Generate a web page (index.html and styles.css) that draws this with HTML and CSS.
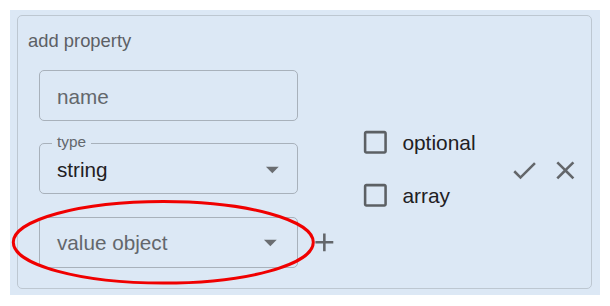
FILE: index.html
```html
<!DOCTYPE html>
<html>
<head>
<meta charset="utf-8">
<link rel="stylesheet" href="styles.css">
</head>
<body>
<div class="outer">
  <div class="panel">
    <div class="title">add property</div>
    <div class="row">
      <div class="fields">
        <div class="field"><span class="placeholder">name</span></div>
        <div class="field">
          <span class="label">type</span>
          <span class="value">string</span>
          <svg class="arrow" viewBox="0 0 24 24"><path d="M7 10l5 5 5-5z"/></svg>
        </div>
        <div class="value-row">
          <div class="field">
            <span class="placeholder">value object</span>
            <svg class="arrow arrow-alt" viewBox="0 0 24 24"><path d="M7 10l5 5 5-5z"/></svg>
          </div>
          <svg class="icon plus" viewBox="0 0 24 24"><path d="M19 13h-6v6h-2v-6H5v-2h6V5h2v6h6v2z"/></svg>
        </div>
      </div>
      <div class="checks">
        <label class="check">
          <span class="box"><svg class="icon" viewBox="0 0 24 24"><path d="M19 5v14H5V5h14m0-2H5c-1.11 0-2 .9-2 2v14c0 1.1.89 2 2 2h14c1.1 0 2-.9 2-2V5c0-1.1-.9-2-2-2z"/></svg></span>
          <span class="check-text">optional</span>
        </label>
        <label class="check">
          <span class="box"><svg class="icon" viewBox="0 0 24 24"><path d="M19 5v14H5V5h14m0-2H5c-1.11 0-2 .9-2 2v14c0 1.1.89 2 2 2h14c1.1 0 2-.9 2-2V5c0-1.1-.9-2-2-2z"/></svg></span>
          <span class="check-text">array</span>
        </label>
      </div>
      <div class="actions">
        <svg class="icon" viewBox="0 0 24 24"><path d="M9 16.17L4.83 12l-1.420 1.41L9 19 21 7l-1.41-1.41z"/></svg>
        <svg class="icon" viewBox="0 0 24 24"><path d="M19 6.41L17.59 5 12 10.59 6.41 5 5 6.41 10.59 12 5 17.59 6.41 19 12 13.41 17.59 19 19 17.59 13.41 12z"/></svg>
      </div>
    </div>
  </div>
</div>
<svg class="annotation" width="610" height="306" viewBox="0 0 610 306">
  <ellipse cx="163.3" cy="242.3" rx="150" ry="40.8" fill="none" stroke="#f00000" stroke-width="3"/>
</svg>
</body>
</html>
```

FILE: styles.css
```css
html, body {
  margin: 0;
  padding: 0;
  background: #ffffff;
}

body {
  font-family: "Liberation Sans", Arial, Helvetica, sans-serif;
  width: 610px;
  height: 306px;
  overflow: hidden;
  position: relative;
}

.outer {
  margin: 10px 0 0 10px;
  width: 590px;
  height: 285px;
  background: #dce8f5;
  padding: 5px 8px 6px 7px;
  box-sizing: border-box;
}

.panel {
  height: 100%;
  box-sizing: border-box;
  border: 1px solid #bdc7d1;
  border-radius: 5px;
  padding: 15px 10px 0 10px;
}

.title {
  font-size: 18.4px;
  line-height: 20px;
  color: #5c6065;
}

.row {
  display: flex;
  align-items: center;
  padding-top: 19px;
}

.fields {
  margin-left: 11px;
  display: flex;
  flex-direction: column;
  gap: 22.1px;
}

.field {
  position: relative;
  width: 259px;
  height: 51.2px;
  box-sizing: border-box;
  border: 1px solid #a8b1bb;
  border-radius: 5px;
  display: flex;
  align-items: center;
  padding: 2px 17px 0 17px;
  font-size: 20.7px;
  line-height: 24px;
}

.placeholder {
  color: #63676c;
}

.value {
  color: #1f2023;
}

.label {
  position: absolute;
  left: 12px;
  top: -10px;
  padding: 0 5px;
  background: #dce8f5;
  font-size: 15.36px;
  line-height: 16px;
  color: #63676c;
}

.arrow {
  position: absolute;
  right: 9px;
  top: 50%;
  margin-top: -14.8px;
  width: 30.7px;
  height: 30.7px;
  fill: #6a6d71;
}

.arrow-alt {
  right: 11px;
}

.value-row {
  display: flex;
  align-items: center;
}

.icon {
  width: 30.7px;
  height: 30.7px;
  fill: #63666a;
  flex: none;
  display: block;
}

.plus {
  margin-left: 11px;
}

.checks {
  margin-left: 9px;
  display: flex;
  flex-direction: column;
}

.check {
  display: flex;
  align-items: center;
}

.box {
  padding: 11.5px;
  display: block;
}

.box .icon {
  fill: #5c6064;
}

.check-text {
  font-size: 20.9px;
  line-height: 24px;
  color: #1f2023;
  padding-top: 1px;
}

.actions {
  margin-left: auto;
  margin-right: 0;
  padding-top: 3px;
  display: flex;
  gap: 11px;
}

.annotation {
  position: absolute;
  left: 0;
  top: 0;
  pointer-events: none;
}
```
